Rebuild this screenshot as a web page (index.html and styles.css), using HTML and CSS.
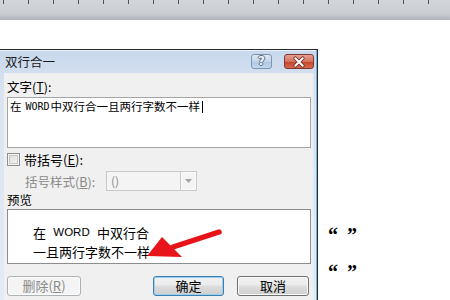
FILE: index.html
```html
<!DOCTYPE html>
<html>
<head>
<meta charset="utf-8">
<link rel="stylesheet" href="styles.css">
</head>
<body>
<div class="ruler"></div>
<div class="canvas">
  <div class="dialog">
    <div class="titlebar">
      <span class="title">双行合一</span>
      <div class="cbtn help"><span>?</span></div>
      <div class="cbtn close">
        <svg width="30" height="14" viewBox="0 0 30 14"><path d="M11 3 L19 11 M19 3 L11 11" stroke="#6b2a20" stroke-width="4" stroke-linecap="round"/><path d="M11 3 L19 11 M19 3 L11 11" stroke="#fff" stroke-width="2.2" stroke-linecap="round"/></svg>
      </div>
    </div>
    <div class="body">
      <div class="lbl lbl-text">文字(<u>T</u>):</div>
      <div class="textbox">在<span class="latin">WORD</span>中双行合一且两行字数不一样<span class="caret"></span></div>
      <div class="check-row"><span class="checkbox"></span><span class="check-label">带括号(<u>E</u>):</span></div>
      <div class="style-row"><span class="style-label">括号样式(<u>B</u>):</span><div class="combo"><span class="combo-text">()</span><span class="drop"><svg width="7" height="4" viewBox="0 0 7 4"><path d="M0 0 H7 L3.5 4 Z" fill="#a3a3a3"/></svg></span></div></div>
      <div class="lbl lbl-preview">预览</div>
      <div class="preview">
        <div class="pv-line1"><span>在</span><span class="pv-latin">WORD</span><span>中双行合</span></div>
        <div class="pv-line2">一且两行字数不一样</div>
      </div>
      <div class="buttons">
        <div class="btn disabled">删除(<u>R</u>)</div>
        <div class="btn default">确定</div>
        <div class="btn">取消</div>
      </div>
    </div>
    <svg class="arrow" width="80" height="40" viewBox="0 0 80 40">
      <path d="M74 6 L28 21" stroke="#e8141a" stroke-width="5.5" stroke-linecap="round"/>
      <path d="M2 30 L17 11 L37 31 Z" fill="#e8141a"/>
    </svg>
  </div>
  <div class="side">
    <div class="quote">“ ”</div>
    <div class="quote q2">“ ”</div>
  </div>
</div>
</body>
</html>
```
FILE: styles.css
```css
html, body {
  margin: 0;
  padding: 0;
}
body {
  background: #ffffff;
  font-family: "Noto Sans CJK SC", "Noto Sans", sans-serif;
  font-size: 12px;
  color: #000;
  width: 450px;
  height: 300px;
  overflow: hidden;
}
.ruler {
  height: 20px;
  background-image:
    linear-gradient(to right, #555 1px, transparent 1px),
    linear-gradient(#d3d6db, #c9cdd2 70%, #b0b4ba);
  background-size: 25px 4px, 100% 100%;
  background-repeat: repeat-x, no-repeat;
  background-position: 3px 0, 0 0;
}
.canvas {
  display: flex;
  padding-top: 29px;
}
.dialog {
  position: relative;
  box-sizing: border-box;
  width: 318px;
  height: 251px;
  border-top: 1px solid #2b2b2b;
  border-right: 1px solid #2b2b2b;
  background: linear-gradient(#c8d8ec, #d9e4f2 40px, #e3ebf5);
  box-shadow: inset -1px 0 0 #6db4e4, inset 0 1px 0 #e9f0f8;
  display: flex;
  flex-direction: column;
}
.titlebar {
  height: 23px;
  display: flex;
  align-items: flex-start;
}
.title {
  padding-left: 5px;
  line-height: 24px;
  font-size: 12.5px;
  color: #1b1b1b;
}
.cbtn {
  margin-top: 4px;
  height: 15px;
  box-sizing: border-box;
  border-radius: 3px;
  display: flex;
  align-items: center;
  justify-content: center;
}
.help {
  margin-left: auto;
  width: 21px;
  border: 1px solid #7b95b5;
  background: linear-gradient(#dfe9f5, #c2d4ea 50%, #aec5e2 51%, #c4d7ee);
}
.help span {
  font-family: "DejaVu Sans", sans-serif;
  font-weight: bold;
  font-size: 12px;
  line-height: 13px;
  color: #eef3f9;
  text-shadow: 1px 0 0 #5b6e86, -1px 0 0 #5b6e86, 0 1px 0 #5b6e86, 0 -1px 0 #5b6e86;
}
.close {
  margin-left: 12px;
  margin-right: 3px;
  width: 30px;
  border: 1px solid #7e3a2f;
  background: linear-gradient(#e7a193, #d4715d 50%, #c2442c 51%, #d66a4f);
}
.close svg {
  display: block;
}
.body {
  flex: 1;
  margin: 0 4px 0 4px;
  padding: 0 2px 0 3px;
  background: #f0f0f0;
  display: flex;
  flex-direction: column;
}
.lbl {
  height: 16px;
  line-height: 16px;
  font-size: 12.5px;
}
.lbl-text {
  margin-top: 6px;
}
.textbox {
  margin-top: 2px;
  height: 51px;
  box-sizing: border-box;
  border: 1px solid #a5a5a5;
  background: #fff;
  padding: 1px 2px 0;
  font-size: 11.5px;
  line-height: 15px;
  display: flex;
  align-items: flex-start;
}
.latin {
  font-family: "DejaVu Sans Mono", monospace;
  font-size: 10px;
  margin: 0 1px 0 4px;
}
.caret {
  display: inline-block;
  width: 1px;
  height: 12px;
  margin-top: 2px;
  margin-left: 2px;
  background: #000;
}
.check-row {
  margin-top: 4px;
  height: 15px;
  display: flex;
  align-items: center;
  gap: 4px;
}
.checkbox {
  width: 13px;
  height: 13px;
  box-sizing: border-box;
  border: 1px solid #8e8f8f;
  background: linear-gradient(135deg, #dcdcdc, #f6f6f6);
  box-shadow: inset 0 0 0 1px #f4f4f4, inset 0 0 0 2px #c8c8c8;
}
.check-label {
  font-size: 13px;
}
.style-row {
  margin-top: 4px;
  height: 20px;
  display: flex;
  align-items: center;
  padding-left: 18px;
}
.style-label {
  width: 81px;
  color: #8a8a8a;
  font-size: 12.5px;
}
.combo {
  width: 91px;
  height: 20px;
  box-sizing: border-box;
  border: 1px solid #c9c9c9;
  background: #f4f4f4;
  display: flex;
}
.combo-text {
  flex: 1;
  padding-left: 4px;
  line-height: 18px;
  color: #8a8a8a;
  font-size: 12px;
}
.drop {
  width: 16px;
  box-sizing: border-box;
  border-left: 1px solid #c9c9c9;
  background: #f4f4f4;
  box-shadow: inset 0 0 0 1px #fbfbfb;
  display: flex;
  align-items: center;
  justify-content: center;
}
.drop svg {
  display: block;
}
.lbl-preview {
  margin-top: 1px;
}
.preview {
  margin-top: 1px;
  height: 55px;
  box-sizing: border-box;
  border: 1px solid #8d8d8d;
  background: #fff;
  padding: 13px 0 0 25px;
  font-size: 13px;
  line-height: 19px;
}
.pv-line1 {
  width: 116px;
  display: flex;
  justify-content: space-between;
}
.pv-latin {
  font-family: "Liberation Sans", sans-serif;
  font-size: 11.5px;
}
.pv-line2 {
  white-space: nowrap;
}
.buttons {
  margin-top: 12px;
  display: flex;
  padding-right: 2px;
}
.btn {
  height: 20px;
  width: 72px;
  box-sizing: border-box;
  border: 1px solid #707070;
  border-radius: 3px;
  background: linear-gradient(#f2f2f2, #ebebeb 45%, #dddddd 50%, #cfcfcf);
  box-shadow: inset 0 0 0 1px #fbfbfb;
  display: flex;
  align-items: center;
  justify-content: center;
  font-size: 13px;
  line-height: 18px;
}
.btn.disabled {
  width: 74px;
  border-color: #adb2b5;
  background: #f4f4f4;
  color: #8a8a8a;
}
.btn.default {
  margin-left: auto;
  width: 71px;
  border-color: #3c7fb1;
  box-shadow: inset 0 0 0 1px #98d1ef;
}
.btn + .btn.default + .btn {
  margin-left: 13px;
}
.arrow {
  position: absolute;
  left: 145px;
  top: 176px;
}
.side {
  padding-left: 10px;
  padding-top: 176px;
}
.quote {
  font-family: "Liberation Serif", serif;
  font-weight: bold;
  font-size: 20px;
  line-height: 20px;
  word-spacing: 4px;
}
.q2 {
  margin-top: 17px;
}
```
